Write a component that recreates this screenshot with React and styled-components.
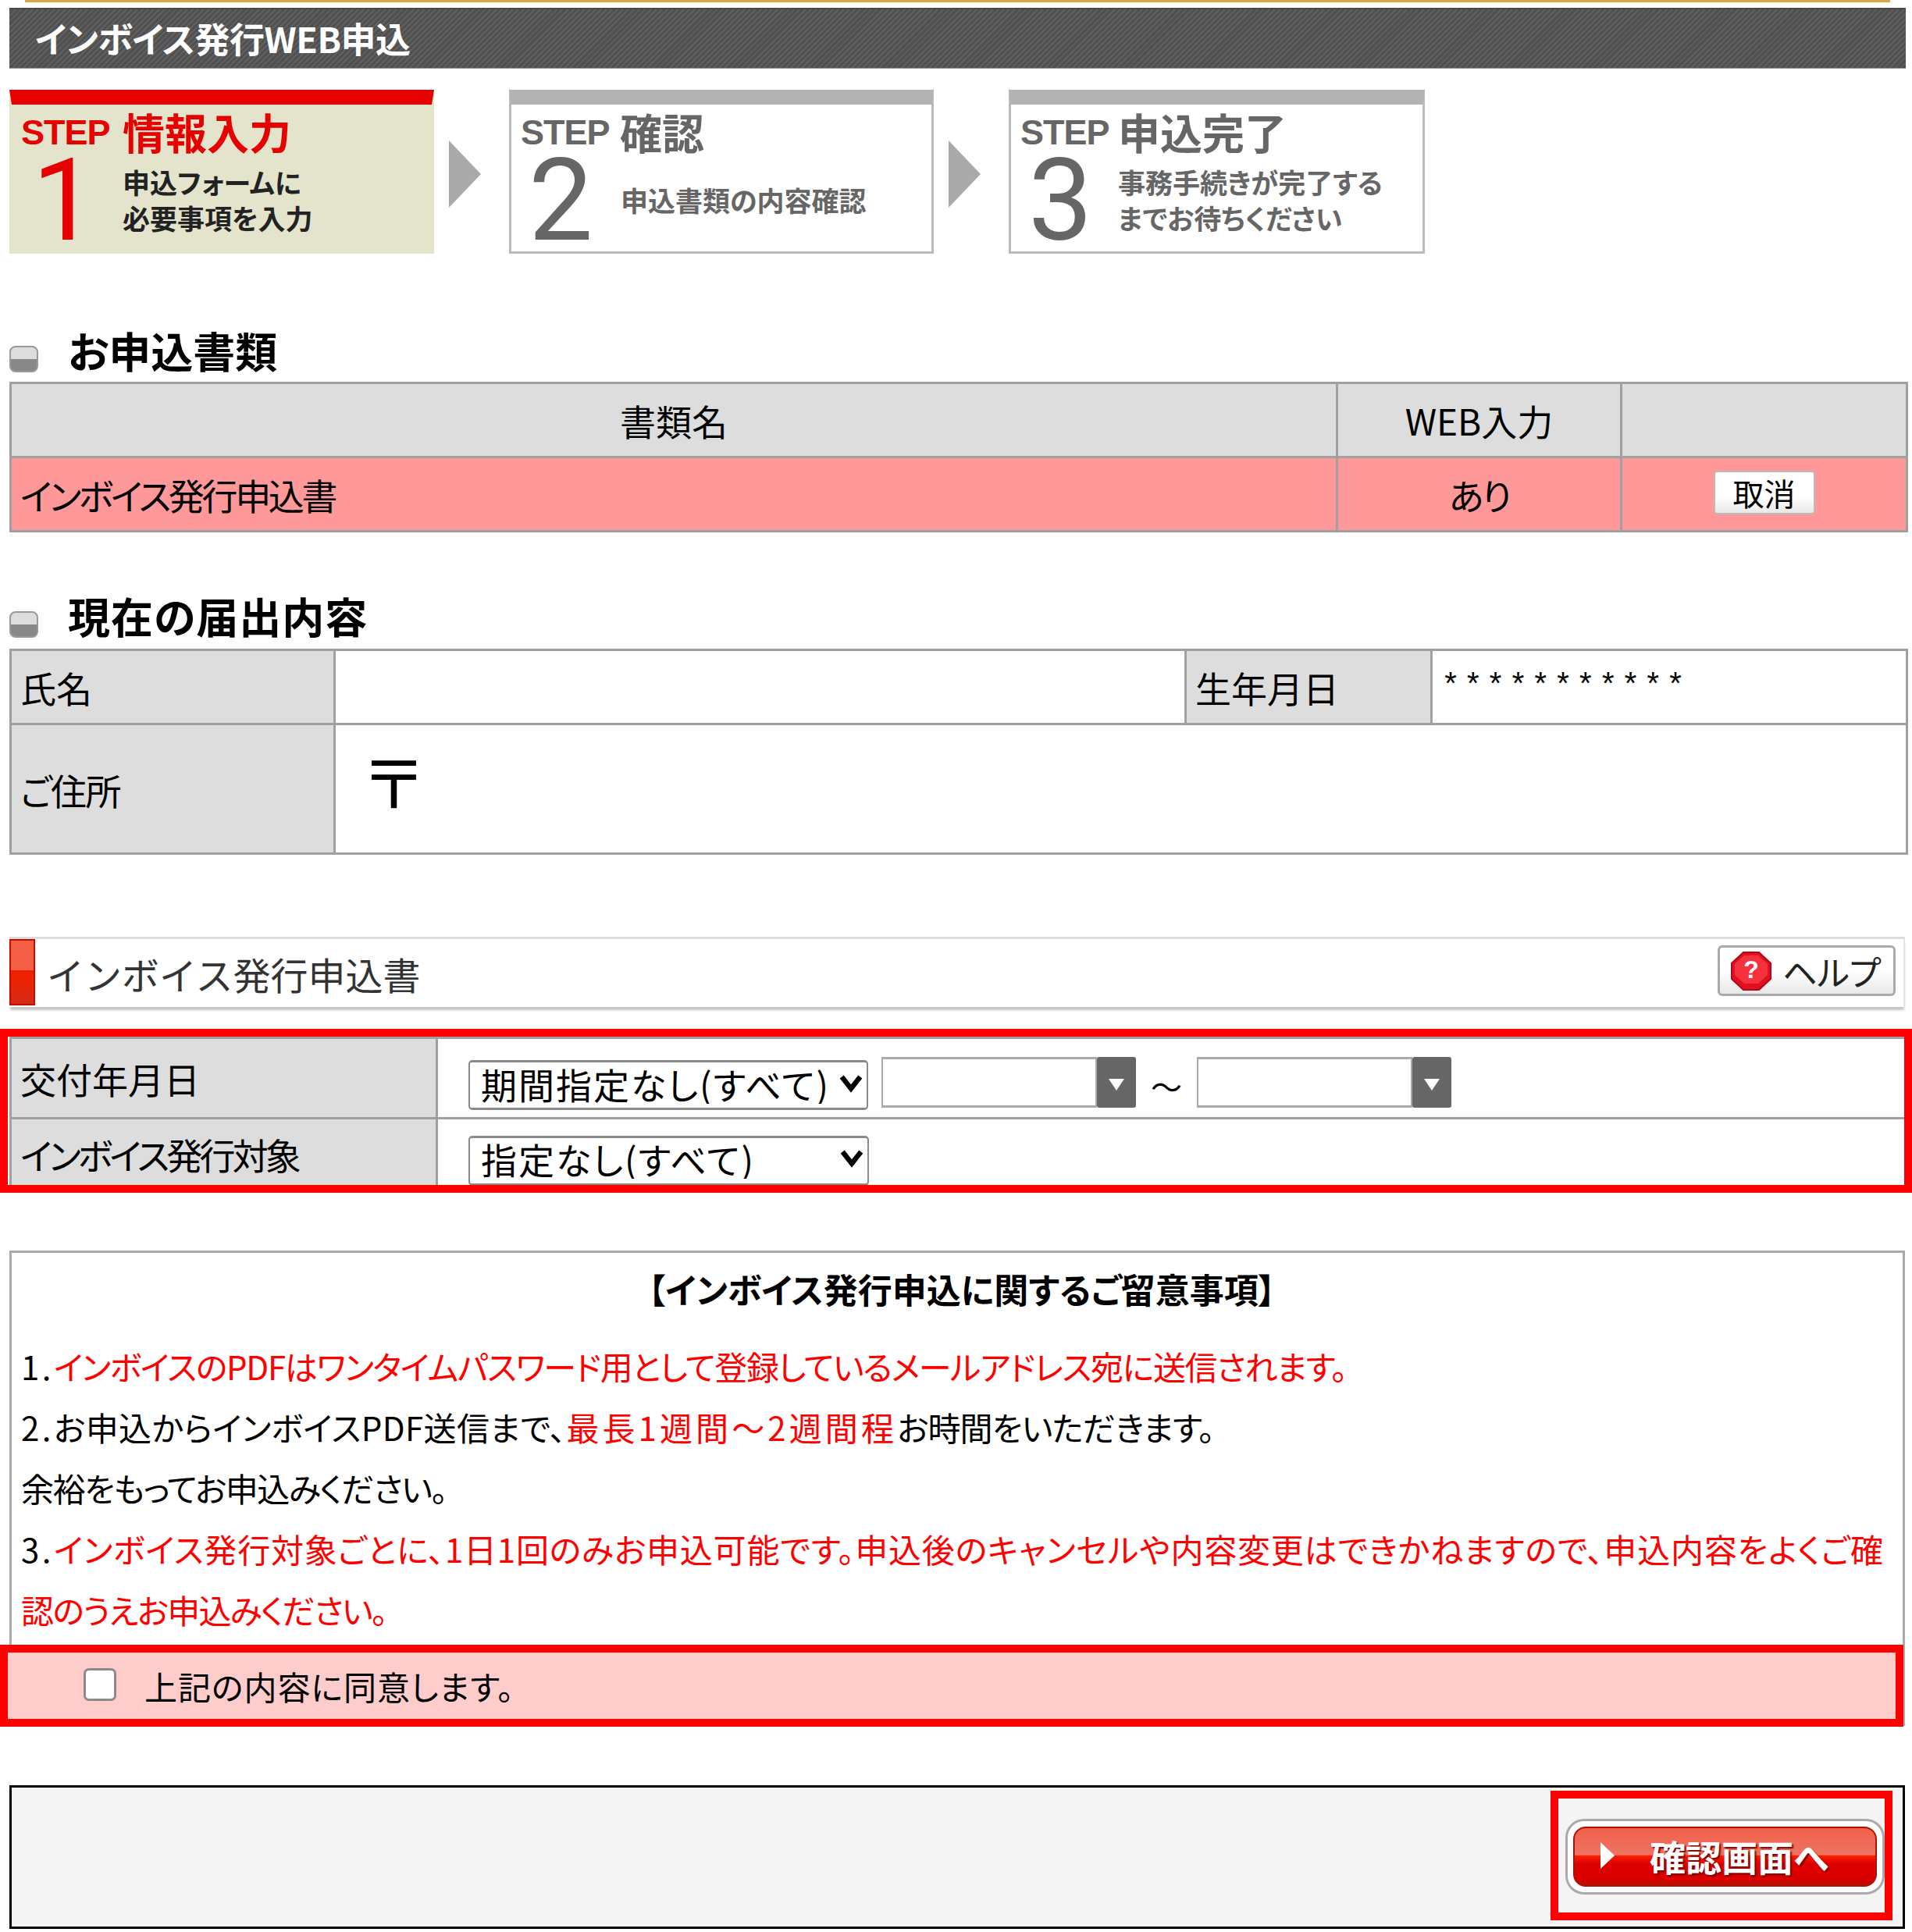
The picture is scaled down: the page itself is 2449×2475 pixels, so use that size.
import React from "react";
import styled, { createGlobalStyle } from "styled-components";

const Global = createGlobalStyle`
  html, body { margin: 0; padding: 0; background: #fff; }
  body {
    font-family: "Noto Sans CJK JP", "Liberation Sans", sans-serif;
    font-feature-settings: "palt";
    color: #000;
  }
  * { box-sizing: border-box; }
`;

const Page = styled.div`
  width: 2449px;
  height: 2475px;
  overflow: hidden;
`;
const GoldLine = styled.div`
  height: 3px;
  margin: 0 28px 7px 32px;
  background: #d4a83a;
`;
const HeaderBar = styled.h1`
  height: 78px;
  margin: 0 8px 0 12px;
  padding: 0 0 2px 33px;
  display: flex;
  align-items: center;
  font-size: 45px;
  font-weight: 700;
  letter-spacing: -0.5px;
  color: #fff;
  background: repeating-linear-gradient(135deg, #606060 0 2px, #505050 2px 5px);
  border-top: 2px solid #484848;
  border-bottom: 1px solid #999;
`;
const Steps = styled.div`
  display: flex;
  align-items: flex-start;
  margin: 27px 0 0 12px;
`;
const Step = styled.div`
  width: ${(p) => p.$w}px;
  height: 210px;
  flex: none;
  padding: 6px 0 0 12px;
  display: grid;
  grid-template-columns: ${(p) => p.$col}px 1fr;
  grid-template-rows: 63px 102px;
  color: ${(p) => (p.$active ? "#e60000" : "#666")};
  background: ${(p) => (p.$active ? "#e4e4cc" : "#fff")};
  border: 3px solid ${(p) => (p.$active ? "#e4e4cc" : "#bbb")};
  border-top: 19px solid ${(p) => (p.$active ? "#e60000" : "#b3b3b3")};
`;
const StepLabel = styled.div`
  font: 700 45px/59px "Liberation Sans", sans-serif;
  letter-spacing: -1px;
`;
const StepTitle = styled.div`
  font-size: 54px;
  font-weight: 700;
  line-height: 58px;
  white-space: nowrap;
`;
const StepNumber = styled.div`
  font: 400 147px/102px Roboto, "Liberation Sans", sans-serif;
  padding: 3px 0 0 ${(p) => p.$pad}px;
`;
const StepText = styled.div`
  padding: ${(p) => (p.$single ? 30 : 7)}px 0 0 ${(p) => p.$pl || 0}px;
  font-size: 35px;
  font-weight: 700;
  line-height: 46px;
  white-space: nowrap;
  color: ${(p) => (p.$active ? "#222" : "#666")};
`;
const StepArrow = styled.div`
  flex: none;
  width: 0;
  height: 0;
  margin: 65px 36px 0 19px;
  border-left: 41px solid #aaa;
  border-top: 43px solid transparent;
  border-bottom: 43px solid transparent;
`;

const Heading = styled.h2`
  height: ${(p) => p.$h}px;
  margin: ${(p) => p.$top}px 8px 0 12px;
  padding-bottom: 16px;
  display: flex;
  align-items: center;
  gap: 38px;
  font-size: 54px;
  font-weight: 700;
  line-height: 1;
  letter-spacing: ${(p) => p.$ls || 0}px;
`;
const HeadingMark = styled.span`
  width: 37px;
  height: 34px;
  margin-top: 22px;
  flex: none;
  border-radius: 8px;
  border: 2px solid #999;
  background: linear-gradient(#ddd 0 50%, #888 50% 100%);
`;
const Table = styled.table`
  width: ${(p) => p.$w || 2429}px;
  margin-left: ${(p) => (p.$flush ? 0 : 12)}px;
  border-collapse: collapse;
  table-layout: fixed;
  font-size: 46px;
`;
const Cell = styled.td`
  height: ${(p) => p.$h}px;
  padding: 0 ${(p) => p.$pad ?? 11}px;
  border: 3px solid #a0a0a0;
  background: ${(p) => p.$bg || "#fff"};
  text-align: ${(p) => p.$align || "left"};
  vertical-align: middle;
  white-space: nowrap;
  letter-spacing: ${(p) => p.$ls || 0}px;
`;
const SmallButton = styled.button`
  display: block;
  width: 130px;
  height: 56px;
  margin: -4px auto 0;
  padding: 0;
  font: inherit;
  font-size: 40px;
  line-height: 1;
  border: 2px solid #bbb;
  border-radius: 5px;
  background: linear-gradient(#fff 60%, #e8e8e8);
`;
const Stars = styled.div`
  font: 400 40px/1 "Liberation Mono", monospace;
  letter-spacing: 4.8px;
  margin-top: 2px;
`;
const Postal = styled.div`
  font-size: 85px;
  line-height: 1;
  padding-left: 27px;
  margin-top: -24px;
`;

const TitleBar = styled.div`
  height: 90px;
  margin: 105px 9px 0 12px;
  display: flex;
  align-items: center;
  background: #fff;
  border-top: 3px solid #ddd;
  border-right: 2px solid #e4e4e4;
  box-shadow: 0 5px 3px -1px #c4c4c4;
`;
const TitleBlock = styled.span`
  width: 33px;
  height: 85px;
  flex: none;
  margin-top: -2px;
  border: 2px solid #c01000;
  background: linear-gradient(#f45f45 0 47%, #ee2200 47% 60%, #d42a18 100%);
`;
const TitleText = styled.span`
  flex: 1;
  padding: 0 0 0 15px;
  font-size: 48px;
  line-height: 1;
  color: #333;
  font-feature-settings: normal;
`;
const HelpButton = styled.button`
  width: 228px;
  height: 65px;
  margin: -6px 10px 0 0;
  padding: 0 0 0 14px;
  display: flex;
  align-items: center;
  gap: 14px;
  font: inherit;
  font-size: 44px;
  color: #222;
  border: 3px solid #aaa;
  border-radius: 6px;
  background: linear-gradient(#fff 50%, #e8e8e8);
`;

const RedBox = styled.div`
  height: 210px;
  margin-top: 28px;
  padding-left: 2px;
  border: 10px solid #ff0000;
  overflow: hidden;
`;
const Controls = styled.div`
  display: flex;
  align-items: center;
  padding: 11px 0 0 39px;
`;
const SelectWrap = styled.span`
  position: relative;
  display: inline-block;
  flex: none;
  width: ${(p) => p.$w}px;
  height: 64px;
  svg {
    position: absolute;
    right: 7px;
    top: 17px;
    pointer-events: none;
  }
`;
const Select = styled.select`
  appearance: none;
  width: 100%;
  height: 100%;
  padding: 0 0 5px 14px;
  font: inherit;
  font-size: 46px;
  line-height: 52px;
  letter-spacing: 2px;
  font-feature-settings: "palt";
  color: #000;
  background: #fff;
  border: 2px solid #8a8a8a;
  border-top-width: 3px;
  border-bottom-width: 3px;
  border-radius: 5px;
`;
const DateField = styled.span`
  display: inline-flex;
  flex: none;
  height: 65px;
  margin-left: ${(p) => p.$ml}px;
`;
const DateInput = styled.input`
  width: 276px;
  height: 100%;
  border: 2px solid #aaa;
  border-top-width: 3px;
  border-bottom-width: 3px;
  background: #fff;
  outline: none;
`;
const DateButton = styled.span`
  width: 50px;
  height: 100%;
  display: flex;
  align-items: center;
  justify-content: center;
  background: #666;
  border-radius: 3px;
  &::after {
    content: "";
    margin-top: 6px;
    border-top: 15px solid #fff;
    border-left: 10px solid transparent;
    border-right: 10px solid transparent;
  }
`;
const Tilde = styled.span`
  flex: none;
  width: 78px;
  text-align: center;
  font-size: 40px;
  line-height: 1;
  padding-top: 8px;
`;

const Notice = styled.div`
  height: 609px;
  margin: 74px 9px 0 12px;
  border: 3px solid #aaa;
  border-bottom-width: 4px;
`;
const NoticeBody = styled.div`
  height: 502px;
  padding: 15px 0 0 12px;
  font-size: 42px;
  line-height: 78px;
  white-space: nowrap;
`;
const NoticeTitle = styled.div`
  font-weight: 700;
  font-size: 44px;
  text-align: center;
  height: 91px;
  line-height: 62px;
`;
const NoticeLine = styled.div`
  letter-spacing: ${(p) => p.$ls || 0}px;
`;
const Num = styled.span`
  letter-spacing: 3.5px;
`;
const Run = styled.span`
  letter-spacing: ${(p) => p.$ls || 0}px;
`;
const Red = styled.span`
  color: #ff0000;
  ${(p) => (p.$ls !== undefined ? `letter-spacing: ${p.$ls}px;` : "")}
`;
const CheckBar = styled.label`
  height: 105px;
  margin: 0 -1px 0 -15px;
  padding-left: 97px;
  display: flex;
  align-items: center;
  gap: 36px;
  font-size: 42px;
  letter-spacing: 1px;
  background: #ffcccc;
  border: 10px solid #ff0000;
  position: relative;
`;
const Check = styled.span`
  width: 42px;
  height: 42px;
  flex: none;
  margin-top: -4px;
  background: #fff;
  border: 3px solid #8a8a8a;
  border-radius: 7px;
`;

const Footer = styled.div`
  height: 184px;
  margin: 76px 9px 0 12px;
  padding: 4px 13px 0 0;
  display: flex;
  justify-content: flex-end;
  align-items: flex-start;
  background: #f4f4f4;
  border: 3px solid #000;
`;
const ButtonBox = styled.div`
  width: 438px;
  height: 166px;
  padding: 26px 0 0 9px;
  border: 10px solid #ff0000;
`;
const NextOuter = styled.button`
  width: 409px;
  height: 97px;
  padding: 7px;
  display: block;
  border: 3px solid #aaa;
  border-radius: 24px;
  background: #fff;
`;
const NextInner = styled.span`
  height: 100%;
  padding: 0 0 3px 33px;
  display: flex;
  align-items: center;
  gap: 45px;
  color: #fff;
  font-family: "Noto Sans CJK JP", sans-serif;
  font-size: 46px;
  font-weight: 700;
  line-height: 1;
  text-shadow: 2px 2px 2px #700;
  border: 2px solid #b01000;
  border-radius: 16px;
  background: linear-gradient(#f0604a 0, #ef7463 47%, #fa2200 48%, #e00000 62%, #d80000 90%, #b81000 100%);
  &::before {
    content: "";
    border-left: 18px solid #fff;
    border-top: 17px solid transparent;
    border-bottom: 17px solid transparent;
  }
`;

const HelpIcon = () => (
  <svg width="52" height="50" viewBox="0 0 52 50" aria-hidden="true">
    <polygon points="16,1 36,1 51,15 51,35 36,49 16,49 1,35 1,15" fill="#e01020" stroke="#b00818" strokeWidth="2" />
    <polygon points="17,5 35,5 47,16 47,30 35,41 17,41 5,30 5,16" fill="#f6303c" />
    <text x="26" y="34" textAnchor="middle" fontSize="32" fontWeight="700" fill="#fff" fontFamily="Liberation Sans, sans-serif">?</text>
  </svg>
);

const Chevron = () => (
  <svg width="30" height="30" viewBox="0 0 28 28" aria-hidden="true">
    <path d="M3 7 L14 21 L25 7" fill="none" stroke="#000" strokeWidth="6" />
  </svg>
);

const Col = styled.col`
  width: ${(p) => p.$w}px;
`;

export default function App() {
  return (
    <Page>
      <Global />
      <GoldLine />
      <HeaderBar>インボイス発行WEB申込</HeaderBar>
      <Steps>
        <Step $active $w={544} $col={130}>
          <StepLabel>STEP</StepLabel>
          <StepTitle>情報入力</StepTitle>
          <StepNumber $pad={14}>1</StepNumber>
          <StepText $active>申込フォームに<br />必要事項を入力</StepText>
        </Step>
        <StepArrow />
        <Step $w={544} $col={127}>
          <StepLabel>STEP</StepLabel>
          <StepTitle>確認</StepTitle>
          <StepNumber $pad={10}>2</StepNumber>
          <StepText $single $pl={1}>申込書類の内容確認</StepText>
        </Step>
        <StepArrow />
        <Step $w={533} $col={125}>
          <StepLabel>STEP</StepLabel>
          <StepTitle>申込完了</StepTitle>
          <StepNumber $pad={10}>3</StepNumber>
          <StepText>事務手続きが完了する<br />までお待ちください</StepText>
        </Step>
      </Steps>

      <Heading $top={100} $h={64}>
        <HeadingMark />
        お申込書類
      </Heading>
      <Table>
        <colgroup><Col $w={1699} /><Col $w={364} /><Col $w={366} /></colgroup>
        <tbody>
          <tr>
            <Cell $h={95} $bg="#dddddd" $align="center">書類名</Cell>
            <Cell $bg="#dddddd" $align="center">WEB入力</Cell>
            <Cell $bg="#dddddd" />
          </tr>
          <tr>
            <Cell $h={95} $bg="#ff9999" $ls={-3.3}>インボイス発行申込書</Cell>
            <Cell $bg="#ff9999" $align="center" $ls={-3}>あり</Cell>
            <Cell $bg="#ff9999" $align="center"><SmallButton>取消</SmallButton></Cell>
          </tr>
        </tbody>
      </Table>

      <Heading $top={80} $h={69} $ls={1}>
        <HeadingMark />
        現在の届出内容
      </Heading>
      <Table>
        <colgroup><Col $w={415} /><Col $w={1090} /><Col $w={315} /><Col $w={609} /></colgroup>
        <tbody>
          <tr>
            <Cell $h={95} $bg="#dddddd">氏名</Cell>
            <Cell />
            <Cell $bg="#dddddd">生年月日</Cell>
            <Cell><Stars>***********</Stars></Cell>
          </tr>
          <tr>
            <Cell $h={166} $bg="#dddddd" $ls={-1.5}>ご住所</Cell>
            <Cell colSpan={3}><Postal>〒</Postal></Cell>
          </tr>
        </tbody>
      </Table>

      <TitleBar>
        <TitleBlock />
        <TitleText>インボイス発行申込書</TitleText>
        <HelpButton><HelpIcon />ヘルプ</HelpButton>
      </TitleBar>

      <RedBox>
        <Table $flush $w={2428}>
          <colgroup><Col $w={546} /><Col $w={1882} /></colgroup>
          <tbody>
            <tr>
              <Cell $h={103} $bg="#dddddd">交付年月日</Cell>
              <Cell $pad={0}>
                <Controls>
                  <SelectWrap $w={512}>
                    <Select defaultValue="a"><option value="a">期間指定なし(すべて)</option></Select>
                    <Chevron />
                  </SelectWrap>
                  <DateField $ml={17}><DateInput /><DateButton /></DateField>
                  <Tilde>〜</Tilde>
                  <DateField $ml={0}><DateInput /><DateButton /></DateField>
                </Controls>
              </Cell>
            </tr>
            <tr>
              <Cell $h={90} $bg="#dddddd" $ls={-3.8}>インボイス発行対象</Cell>
              <Cell $pad={0}>
                <Controls>
                  <SelectWrap $w={513}>
                    <Select defaultValue="a"><option value="a">指定なし(すべて)</option></Select>
                    <Chevron />
                  </SelectWrap>
                </Controls>
              </Cell>
            </tr>
          </tbody>
        </Table>
      </RedBox>

      <Notice>
        <NoticeBody>
          <NoticeTitle>【インボイス発行申込に関するご留意事項】</NoticeTitle>
          <NoticeLine><Num>1.</Num><Red $ls={-1.3}>インボイスのPDFはワンタイムパスワード用として登録しているメールアドレス宛に送信されます。</Red></NoticeLine>
          <NoticeLine><Num>2.</Num><Run $ls={0.4}>お申込からインボイスPDF送信まで、</Run><Red $ls={4.1}>最長1週間～2週間程</Red><Run $ls={-0.85}>お時間をいただきます。</Run></NoticeLine>
          <NoticeLine $ls={-1.4}>余裕をもってお申込みください。</NoticeLine>
          <NoticeLine><Num>3.</Num><Red $ls={0.8}>インボイス発行対象ごとに、1日1回のみお申込可能です。申込後のキャンセルや内容変更はできかねますので、申込内容をよくご確</Red></NoticeLine>
          <NoticeLine $ls={-1.7}><Red>認のうえお申込みください。</Red></NoticeLine>
        </NoticeBody>
        <CheckBar><Check />上記の内容に同意します。</CheckBar>
      </Notice>

      <Footer>
        <ButtonBox>
          <NextOuter><NextInner>確認画面へ</NextInner></NextOuter>
        </ButtonBox>
      </Footer>
    </Page>
  );
}
